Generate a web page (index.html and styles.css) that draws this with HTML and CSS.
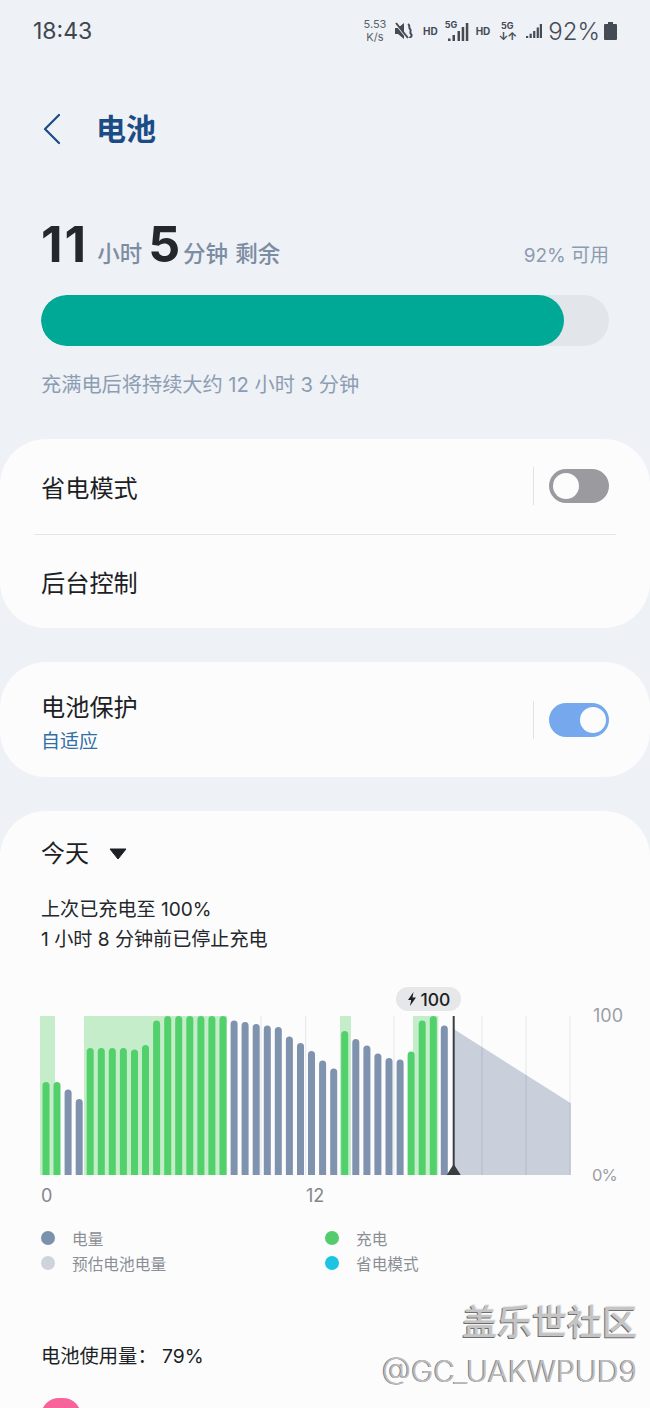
FILE: index.html
```html
<!DOCTYPE html>
<html lang="zh">
<head>
<meta charset="utf-8">
<title>电池</title>
<link rel="stylesheet" href="styles.css">
</head>
<body>
<div class="page">
  <div class="status">
    <span class="clock">18:43</span>
    <div class="status-right">
      <span class="speed">5.53<br>K/s</span>
      <svg class="ic-mute" width="20" height="20" viewBox="0 0 20 20"><path d="M1 7h3l6-5v16l-6-5H1z" fill="#444b55"/><path d="M1 2l12 15" stroke="#eef1f5" stroke-width="2"/><path d="M2 2l12 15" stroke="#444b55" stroke-width="2"/><path d="M14 3c3 2 0 3 2 5s-1 3 1 5-1 3-1 4" fill="none" stroke="#444b55" stroke-width="2"/></svg>
      <span class="hd">HD</span>
      <span class="net"><span class="g5">5G</span><svg width="22" height="20" viewBox="0 0 22 20"><path d="M1 16.500h2.500V19H1zM5.500 13H8v6H5.500zM10.500 9H13v10h-2.500zM14.700 5h2.500v14h-2.500zM18.800 1h2.500v18h-2.500z" fill="#444b55"/></svg></span>
      <span class="hd hd-2">HD</span>
      <span class="net2"><span class="g5">5G</span><span class="arrows">↓↑</span></span>
      <svg class="sig" width="16" height="18" viewBox="0 0 18 18"><path d="M0 14.500h2.500V17H0zM4 12h2.500v5H4zM8 9h2.500v8H8zM12 5h2.500v12H12zM15.500 1H18v16h-2.500z" fill="#444b55"/></svg>
      <span class="pct">92%</span>
      <svg width="13" height="18" viewBox="0 0 13 18"><path d="M4 0h5v2h3a1 1 0 0 1 1 1v14a1 1 0 0 1-1 1H1a1 1 0 0 1-1-1V3a1 1 0 0 1 1-1h3z" fill="#444b55"/></svg>
    </div>
  </div>

  <div class="header">
    <svg class="back" width="20" height="32" viewBox="0 0 20 32"><path d="M17 2L3 16l14 14" fill="none" stroke="#1b4c86" stroke-width="2.2" stroke-linecap="round" stroke-linejoin="round"/></svg>
    <h1 class="title">电池</h1>
  </div>

  <div class="summary">
    <div class="remain">
      <div class="remain-left"><b class="big big-h">11</b><span class="unit">小时</span><b class="big">5</b><span class="unit u-min">分钟</span><span class="unit u-rest">剩余</span></div>
      <span class="avail">92% 可用</span>
    </div>
    <div class="bar"><div class="bar-fill"></div></div>
    <p class="full-note">充满电后将持续大约 12 小时 3 分钟</p>
  </div>

  <section class="card card-power">
    <div class="row row-saver">
      <span class="row-label">省电模式</span>
      <div class="switch-wrap"><span class="vsep"></span><span class="switch off"><span class="knob"></span></span></div>
    </div>
    <div class="divider"></div>
    <div class="row row-bg"><span class="row-label">后台控制</span></div>
  </section>

  <section class="card card-protect">
    <div class="protect-text">
      <span class="row-label">电池保护</span>
      <span class="row-sub">自适应</span>
    </div>
    <div class="switch-wrap"><span class="vsep"></span><span class="switch on"><span class="knob"></span></span></div>
  </section>

  <section class="card card-usage">
    <div class="day"><span class="day-label">今天</span><svg width="18" height="12" viewBox="0 0 18 12"><path d="M1 1h16L9 11z" fill="#1c1f24" stroke="#1c1f24" stroke-linejoin="round"/></svg></div>
    <p class="charge-info">上次已充电至 100%<br>1 小时 8 分钟前已停止充电</p>

    <div class="chart">
      <svg class="plot" width="650" height="180" viewBox="0 0 650 180">
        <g class="grid">
          <path d="M40.5 21V180M84.7 21V180M129 21V180M173 21V180M217 21V180M261 21V180M305.7 21V180M350 21V180M394 21V180M438 21V180M482 21V180M526 21V180M570 21V180"/>
        </g>
        <polygon class="proj" points="453.7,34 570.5,108 570.5,180 453.7,180"/>
        <path class="proj-grid" d="M482 52V180M526 80V180M570 108V180"/>
        <g class="lite">
          <rect x="40" y="21" width="15" height="159"/>
          <rect x="84" y="21" width="143" height="159"/>
          <rect x="340" y="21" width="11" height="159"/>
          <rect x="413" y="21" width="25" height="159"/>
        </g>
        <g class="g">
          <path d="M42.5 180V90.5a3.5 3.5 0 0 1 7 0V180z"/>
          <path d="M53.5 180V90.5a3.5 3.5 0 0 1 7 0V180z"/>
        </g>
        <g class="b">
          <path d="M64.6 180V98a3.5 3.5 0 0 1 7 0V180z"/>
          <path d="M75.7 180V107.500a3.5 3.5 0 0 1 7 0V180z"/>
        </g>
        <g class="g">
          <path d="M86.700 180V56.500a3.5 3.5 0 0 1 7 0V180z"/>
          <path d="M97.800 180V56.500a3.500 3.500 0 0 1 7 0V180z"/>
          <path d="M108.800 180V56.500a3.500 3.500 0 0 1 7 0V180z"/>
          <path d="M119.900 180V56.500a3.500 3.500 0 0 1 7 0V180z"/>
          <path d="M131 180V58a3.500 3.500 0 0 1 7 0V180z"/>
          <path d="M142 180V53.500a3.500 3.500 0 0 1 7 0V180z"/>
          <path d="M153.100 180V29a3.500 3.500 0 0 1 7 0V180z"/>
          <path d="M164.200 180V24.500a3.500 3.500 0 0 1 7 0V180z"/>
          <path d="M175.200 180V24.500a3.500 3.500 0 0 1 7 0V180z"/>
          <path d="M186.300 180V24.500a3.500 3.500 0 0 1 7 0V180z"/>
          <path d="M197.400 180V24.500a3.500 3.500 0 0 1 7 0V180z"/>
          <path d="M208.400 180V24.500a3.500 3.500 0 0 1 7 0V180z"/>
          <path d="M219.500 180V24.500a3.500 3.500 0 0 1 7 0V180z"/>
        </g>
        <g class="b">
          <path d="M230.600 180V29a3.500 3.500 0 0 1 7 0V180z"/>
          <path d="M241.600 180V30.500a3.500 3.500 0 0 1 7 0V180z"/>
          <path d="M252.700 180V32.500a3.500 3.500 0 0 1 7 0V180z"/>
          <path d="M263.800 180V34a3.500 3.500 0 0 1 7 0V180z"/>
          <path d="M274.800 180V35.500a3.500 3.500 0 0 1 7 0V180z"/>
          <path d="M285.900 180V45a3.500 3.500 0 0 1 7 0V180z"/>
          <path d="M297 180V51.500a3.500 3.500 0 0 1 7 0V180z"/>
          <path d="M308 180V59.500a3.500 3.500 0 0 1 7 0V180z"/>
          <path d="M319.100 180V69a3.500 3.500 0 0 1 7 0V180z"/>
          <path d="M330.200 180V77a3.500 3.500 0 0 1 7 0V180z"/>
        </g>
        <g class="g"><path d="M341.200 180V39.500a3.500 3.500 0 0 1 7 0V180z"/></g>
        <g class="b">
          <path d="M352.300 180V47.500a3.500 3.500 0 0 1 7 0V180z"/>
          <path d="M363.400 180V54a3.500 3.500 0 0 1 7 0V180z"/>
          <path d="M374.400 180V62a3.500 3.500 0 0 1 7 0V180z"/>
          <path d="M385.500 180V66.500a3.500 3.500 0 0 1 7 0V180z"/>
          <path d="M396.600 180V68a3.500 3.500 0 0 1 7 0V180z"/>
        </g>
        <g class="g">
          <path d="M407.600 180V60a3.500 3.500 0 0 1 7 0V180z"/>
          <path d="M418.700 180V29a3.500 3.500 0 0 1 7 0V180z"/>
          <path d="M429.800 180V24.500a3.500 3.500 0 0 1 7 0V180z"/>
        </g>
        <g class="b"><path d="M440.800 180V34a3.500 3.500 0 0 1 7 0V180z"/></g>
        <path class="now" d="M453.700 21V172"/>
        <path class="now-tri" d="M453.700 169l7 11h-14z"/>
      </svg>
      <div class="tip"><svg width="10" height="14" viewBox="0 0 10 14"><path d="M6.500 0L1 8h3.200L3 14l6-8.500H5.500z" fill="#1c1f24"/></svg><span>100</span></div>
      <span class="y-l y-top">100</span>
      <span class="y-l y-bot">0%</span>
    </div>
    <div class="x-axis"><span>0</span><span class="x-12">12</span></div>

    <div class="legend">
      <div class="lg"><i class="dot d-b"></i>电量</div>
      <div class="lg"><i class="dot d-g"></i>充电</div>
      <div class="lg"><i class="dot d-e"></i>预估电池电量</div>
      <div class="lg"><i class="dot d-c"></i>省电模式</div>
    </div>

    <p class="usage">电池使用量： 79%</p>
    <div class="app-ic"></div>
  </section>

  <div class="wm"><span class="wm-1">盖乐世社区</span><span class="wm-2">@GC_UAKWPUD9</span></div>
</div>
</body>
</html>
```
FILE: styles.css
```css
*{box-sizing:border-box}
html,body{margin:0;padding:0}
body{background:#eef1f5;font-family:"Inter","Noto Sans CJK SC",sans-serif;color:#1c1f24}
.page{position:relative;width:650px;height:1408px;overflow:hidden}
.status{height:60px;padding:2px 33px 0 33px;display:flex;justify-content:space-between;align-items:center}
.clock{font-size:23px;color:#3f4650}
.status-right{display:flex;align-items:center;gap:4px;color:#444b55}
.speed{font-size:11px;line-height:13px;text-align:center;color:#5a616b;width:26px}
.ic-mute{margin:0 2px}
.hd{font-size:10px;font-weight:700;margin:0 3px}
.hd-2{margin-right:5px}
.net{position:relative;display:block;width:24px;height:22px}
.net svg{position:absolute;right:0;bottom:0}
.g5{font-size:9px;font-weight:700;line-height:10px}
.net .g5{position:absolute;left:0;top:0}
.net2{display:flex;flex-direction:column;align-items:center;line-height:10px;width:16px;margin-right:7px}
.arrows{font-size:11px;font-weight:700;letter-spacing:-1px}
.sig{margin-right:2px}
.pct{font-size:24px;font-weight:300}
.header{height:60px;margin-top:39px;padding-left:42px;display:flex;align-items:center;gap:34px}
.title{margin:0;font-size:30px;font-weight:700;color:#1b4c86;line-height:42px}
.summary{padding:0 41px;margin-top:52px}
.remain{display:flex;justify-content:space-between;align-items:baseline;height:66px}
.remain-left{display:flex;align-items:baseline}
.big{font-size:50px;font-weight:700;color:#24272c;line-height:66px}
.big-h{letter-spacing:2px}
.unit{font-size:22.5px;font-weight:500;color:#7c8ca3;margin:0 6px 0 9px}
.u-min{margin:0 7px 0 3px}
.u-rest{margin:0}
.avail{font-size:19px;color:#8c9bb0}
.bar{height:51px;margin-top:18px;background:#e2e6ea;border-radius:26px;overflow:hidden}
.bar-fill{width:523px;height:100%;background:#00a995;border-radius:26px}
.full-note{margin:26px 0 0;font-size:20.2px;line-height:26px;color:#8c9db3;white-space:nowrap}
.card{background:#fcfcfd;border-radius:46px}
.card-power{margin-top:41px;height:189px;display:flex;flex-direction:column}
.row{display:flex;align-items:center;justify-content:space-between;padding:0 41px}
.row-saver{height:95px}
.row-saver .row-label{margin-top:4px}
.row-saver .switch-wrap{margin-bottom:2px}
.row-bg{height:93px;padding-top:4px}
.row-label{font-size:24.2px;line-height:32px;color:#1c1f24}
.divider{height:1px;margin:0 34px;background:#e3e5e8}
.switch-wrap{display:flex;align-items:center;gap:15px}
.vsep{width:1px;height:38px;background:#dfe1e4}
.switch{position:relative;display:block;width:60px;height:34px;border-radius:17px}
.knob{position:absolute;top:4px;width:26px;height:26px;border-radius:50%;background:#fcfcfd}
.switch.off{background:#9a9a9f}
.switch.off .knob{left:4px}
.switch.on{background:#76a8ee}
.switch.on .knob{right:3px}
.card-protect{margin-top:34px;height:115px;padding:0 41px;display:flex;align-items:center;justify-content:space-between}
.protect-text{display:flex;flex-direction:column;margin-top:7px}
.row-sub{font-size:19px;line-height:26px;margin-top:5px;color:#2f6ea6}
.card-usage{margin-top:34px;height:640px;padding:0 41px;position:relative}
.day{display:flex;align-items:center;gap:20px;height:32px;padding-top:27px;box-sizing:content-box}
.day-label{font-size:24px;line-height:32px}
.charge-info{margin:24px 0 0;font-size:19.1px;line-height:30px;color:#24272c;white-space:nowrap}
.chart{position:relative;margin:31px -41px 0;height:205px}
.plot{position:absolute;left:0;top:10px;display:block}
.grid path{stroke:#e4e6e9;stroke-width:1;fill:none}
.proj{fill:#c9d0db}
.proj-grid{stroke:#b3bac6;stroke-width:1;fill:none}
.lite rect{fill:#c5edc9}
.g path{fill:#52d06c}
.b path{fill:#7f92ae}
.now{stroke:#3a3d42;stroke-width:2}
.now-tri{fill:#3a3d42}
.tip{position:absolute;left:396px;top:2px;width:65px;height:24px;border-radius:12px;background:#e6e7e9;display:flex;align-items:center;justify-content:center;gap:4px;font-size:17.5px;font-weight:500;color:#1c1f24}
.y-l{position:absolute;font-size:18px;color:#9b9fa5;line-height:24px}
.y-top{left:593px;top:19px}
.y-bot{left:592px;top:178px;font-size:16.5px;letter-spacing:-1px}
.x-axis{position:relative;height:24px;margin-top:-6px;font-size:18px;color:#83878d;line-height:24px}
.x-12{position:absolute;left:265px;top:0}
.legend{display:grid;grid-template-columns:284px 1fr;row-gap:1px;margin-top:18px}
.lg{display:flex;align-items:center;gap:17px;height:24px;font-size:15.7px;color:#8b8f95}
.dot{width:14px;height:14px;border-radius:50%;display:block}
.d-b{background:#7b92ad}
.d-g{background:#52cc6c}
.d-e{background:#cfd3dd}
.d-c{background:#1cc4e2}
.usage{margin:68px 0 0;font-size:19.3px;line-height:26px;color:#1c1f24}
.app-ic{width:40px;height:40px;margin-top:29px;border-radius:18px;background:#f7639b}
.wm{position:absolute;right:13px;top:1298px;display:flex;flex-direction:column;align-items:flex-end}
.wm-1{font-size:35px;line-height:48px;font-weight:500;color:#c4c4c4;text-shadow:-1px 1px 0 #6f6f6f,1px -1px 0 #eee}
.wm-2{font-size:30px;line-height:40px;margin-top:5px;font-weight:300;color:#bdbdbd;text-shadow:-1px 0 0 #808080}
```
